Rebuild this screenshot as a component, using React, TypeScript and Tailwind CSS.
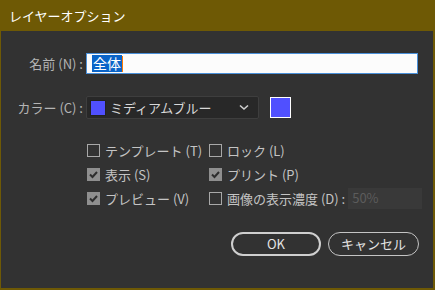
import React from "react";

const font = { fontFamily: '"Noto Sans CJK JP", "Noto Sans", sans-serif' };

function Check({ checked }: { checked: boolean }) {
  return checked ? (
    <div className="w-[13px] h-[13px] bg-[#8f8f8f] flex items-center justify-center shrink-0">
      <svg width="11" height="11" viewBox="0 0 11 11">
        <path d="M2 5.5 L4.5 8 L9 3" stroke="#2e2e2e" strokeWidth="2" fill="none" />
      </svg>
    </div>
  ) : (
    <div className="w-[13px] h-[13px] border border-[#a8a8a8] shrink-0" />
  );
}

function CB({ checked, label }: { checked: boolean; label: string }) {
  return (
    <div className="flex items-center gap-[5px] h-[24px]">
      <Check checked={checked} />
      <span className="text-[13px] text-[#c4c4c4] leading-none">{label}</span>
    </div>
  );
}

export default function App() {
  return (
    <div style={font} className="w-[435px] h-[290px] bg-[#6e5905] flex flex-col">
      <div className="h-[31px] flex items-center pl-[9px] text-[13px] text-white">レイヤーオプション</div>
      <div className="flex-1 mx-[1px] mb-[2px] mr-[2px] bg-[#323232] flex flex-col">
        <div className="flex items-center mt-[22px] h-[21px]">
          <div className="w-[85px] text-right pr-[3px] text-[13px] text-[#b4b4b4]">名前 (N) :</div>
          <div className="w-[332px] h-[21px] bg-[#fcfcfc] border border-[#4a90d9] flex items-center pl-[5px]">
            <span className="bg-[#0a64c8] text-white text-[14px] leading-[17px] px-[1px]">全体</span>
            <span className="w-[1px] h-[16px] bg-[#ff7a00]" />
          </div>
        </div>
        <div className="flex items-center mt-[22px] h-[23px]">
          <div className="w-[85px] text-right pr-[3px] text-[13px] text-[#b4b4b4]">カラー (C) :</div>
          <div className="w-[173px] h-[23px] bg-[#282828] border border-[#3e3e3e] rounded-[2px] flex items-center pl-[3px]">
            <div className="w-[16px] h-[16px] bg-[#5050ff] border border-[#222]" />
            <span className="ml-[4px] text-[13px] text-[#d8d8d8]">ミディアムブルー</span>
            <svg className="ml-auto mr-[9px]" width="10" height="7" viewBox="0 0 10 7">
              <path d="M1 1.5 L5 5 L9 1.5" stroke="#cfcfcf" strokeWidth="1.6" fill="none" />
            </svg>
          </div>
          <div className="ml-[11px] w-[21px] h-[21px] border border-white bg-[#5050ff]" />
        </div>
        <div className="flex mt-[19px] pl-[86px]">
          <div className="flex flex-col w-[122px]">
            <CB checked={false} label="テンプレート (T)" />
            <CB checked={true} label="表示 (S)" />
            <CB checked={true} label="プレビュー (V)" />
          </div>
          <div className="flex flex-col">
            <CB checked={false} label="ロック (L)" />
            <CB checked={true} label="プリント (P)" />
            <div className="flex items-center">
              <CB checked={false} label="画像の表示濃度 (D) :" />
              <div className="ml-[3px] w-[74px] h-[21px] bg-[#393939] text-[13px] text-[#5c5c5c] flex items-center pl-[4px]">50%</div>
            </div>
          </div>
        </div>
        <div className="flex justify-end gap-[7px] mt-[22px] pr-[14px]">
          <button className="w-[90px] h-[24px] rounded-full border-2 border-[#cfcfcf] text-[13px] text-[#e4e4e4] flex items-center justify-center">OK</button>
          <button className="w-[91px] h-[24px] rounded-full border border-[#c4c4c4] text-[13px] text-[#e4e4e4] flex items-center justify-center">キャンセル</button>
        </div>
      </div>
    </div>
  );
}
